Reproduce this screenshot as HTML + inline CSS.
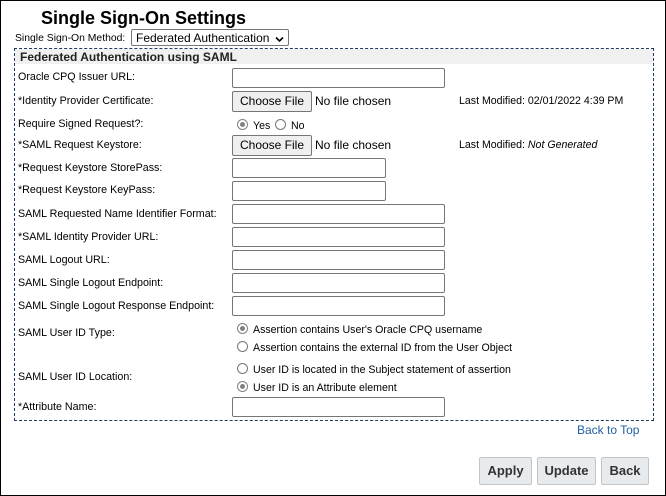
<!DOCTYPE html>
<html><head><style>
body{margin:0;width:666px;height:496px;position:relative;font-family:"Liberation Sans",Arial,sans-serif;color:#000;overflow:hidden}
.frame{position:absolute;left:0;top:0;width:664px;height:494px;border:1px solid #000}
.a{position:absolute;white-space:nowrap}
.l{position:absolute;left:18px;font-size:10.7px;white-space:nowrap}
.in{position:absolute;left:232px;width:211px;height:18px;border:1px solid #767676;border-radius:2px;background:#fff}
.btnf{position:absolute;left:232px;width:78px;height:19px;border:1px solid #767676;border-radius:2px;background:#efefef;font-size:12px;text-align:center;line-height:19px}
.r{position:absolute;width:11px;height:11px;border:1px solid #767676;border-radius:50%;background:#fff;box-sizing:border-box}
.r.on::after{content:"";position:absolute;left:2px;top:2px;width:5px;height:5px;border-radius:50%;background:#808080}
.r.on{border-color:#808080}
.t12{font-size:12px}
.t11{font-size:10.6px}
.b{position:absolute;top:457px;height:26px;border:1px solid #c5c5c5;border-radius:2px;background:#e8ebee;font-size:13px;font-weight:bold;color:#333;text-align:center;line-height:26px}
</style></head><body>
<div class="frame"></div>
<div class="a" style="left:41px;top:8px;font-size:18px;font-weight:bold">Single Sign-On Settings</div>
<div class="a" style="left:15px;top:33px;font-size:10.4px">Single Sign-On Method:</div>
<div class="a" style="left:131px;top:29px;height:17px;border:1px solid #767676;border-radius:2px;font-size:12px;line-height:17px;padding-left:4px;box-sizing:border-box;width:158px">Federated Authentication <svg width="9" height="7" viewBox="0 0 9 7" style="position:absolute;right:4px;top:6px"><path d="M1 1.5L4.5 5L8 1.5" stroke="#000" stroke-width="1.6" fill="none"/></svg></div>
<div class="a" style="left:14px;top:48px;width:638px;height:371px;border:1px dashed #1f3b60"></div>
<div class="a" style="left:15px;top:49px;width:638px;height:15px;background:#f0f0f0"></div>
<div class="a" style="left:20px;top:50px;font-size:12px;font-weight:bold;color:#222">Federated Authentication using SAML</div>

<div class="l" style="top:71px">Oracle CPQ Issuer URL:</div><div class="in" style="top:68px"></div>
<div class="l" style="top:95px">*Identity Provider Certificate:</div><div class="btnf" style="top:91px">Choose File</div>
<div class="a t12" style="left:315px;top:94px">No file chosen</div>
<div class="a t11" style="left:459px;top:95px">Last Modified: 02/01/2022 4:39 PM</div>
<div class="l" style="top:118px">Require Signed Request?:</div>
<div class="r on" style="left:237px;top:119px"></div><div class="a t11" style="left:253px;top:120px">Yes</div>
<div class="r" style="left:275px;top:119px"></div><div class="a t11" style="left:291px;top:120px">No</div>
<div class="l" style="top:139px">*SAML Request Keystore:</div><div class="btnf" style="top:135px">Choose File</div>
<div class="a t12" style="left:315px;top:138px">No file chosen</div>
<div class="a t11" style="left:459px;top:139px">Last Modified: <i>Not Generated</i></div>
<div class="l" style="top:162px">*Request Keystore StorePass:</div><div class="in" style="top:158px;width:152px"></div>
<div class="l" style="top:184px">*Request Keystore KeyPass:</div><div class="in" style="top:181px;width:152px"></div>
<div class="l" style="top:208px">SAML Requested Name Identifier Format:</div><div class="in" style="top:204px"></div>
<div class="l" style="top:231px">*SAML Identity Provider URL:</div><div class="in" style="top:227px"></div>
<div class="l" style="top:254px">SAML Logout URL:</div><div class="in" style="top:250px"></div>
<div class="l" style="top:277px">SAML Single Logout Endpoint:</div><div class="in" style="top:273px"></div>
<div class="l" style="top:300px">SAML Single Logout Response Endpoint:</div><div class="in" style="top:296px"></div>
<div class="l" style="top:327px">SAML User ID Type:</div>
<div class="r on" style="left:237px;top:323px"></div><div class="a t11" style="left:253px;top:324px">Assertion contains User's Oracle CPQ username</div>
<div class="r" style="left:237px;top:341px"></div><div class="a t11" style="left:253px;top:342px">Assertion contains the external ID from the User Object</div>
<div class="l" style="top:371px">SAML User ID Location:</div>
<div class="r" style="left:237px;top:363px"></div><div class="a t11" style="left:253px;top:364px">User ID is located in the Subject statement of assertion</div>
<div class="r on" style="left:237px;top:381px"></div><div class="a t11" style="left:253px;top:382px">User ID is an Attribute element</div>
<div class="l" style="top:401px">*Attribute Name:</div><div class="in" style="top:397px"></div>

<div class="a" style="left:577px;top:423px;font-size:12px;color:#1f5f9f">Back to Top</div>
<div class="b" style="left:479px;width:51px">Apply</div>
<div class="b" style="left:537px;width:57px">Update</div>
<div class="b" style="left:601px;width:46px">Back</div>
</body></html>
